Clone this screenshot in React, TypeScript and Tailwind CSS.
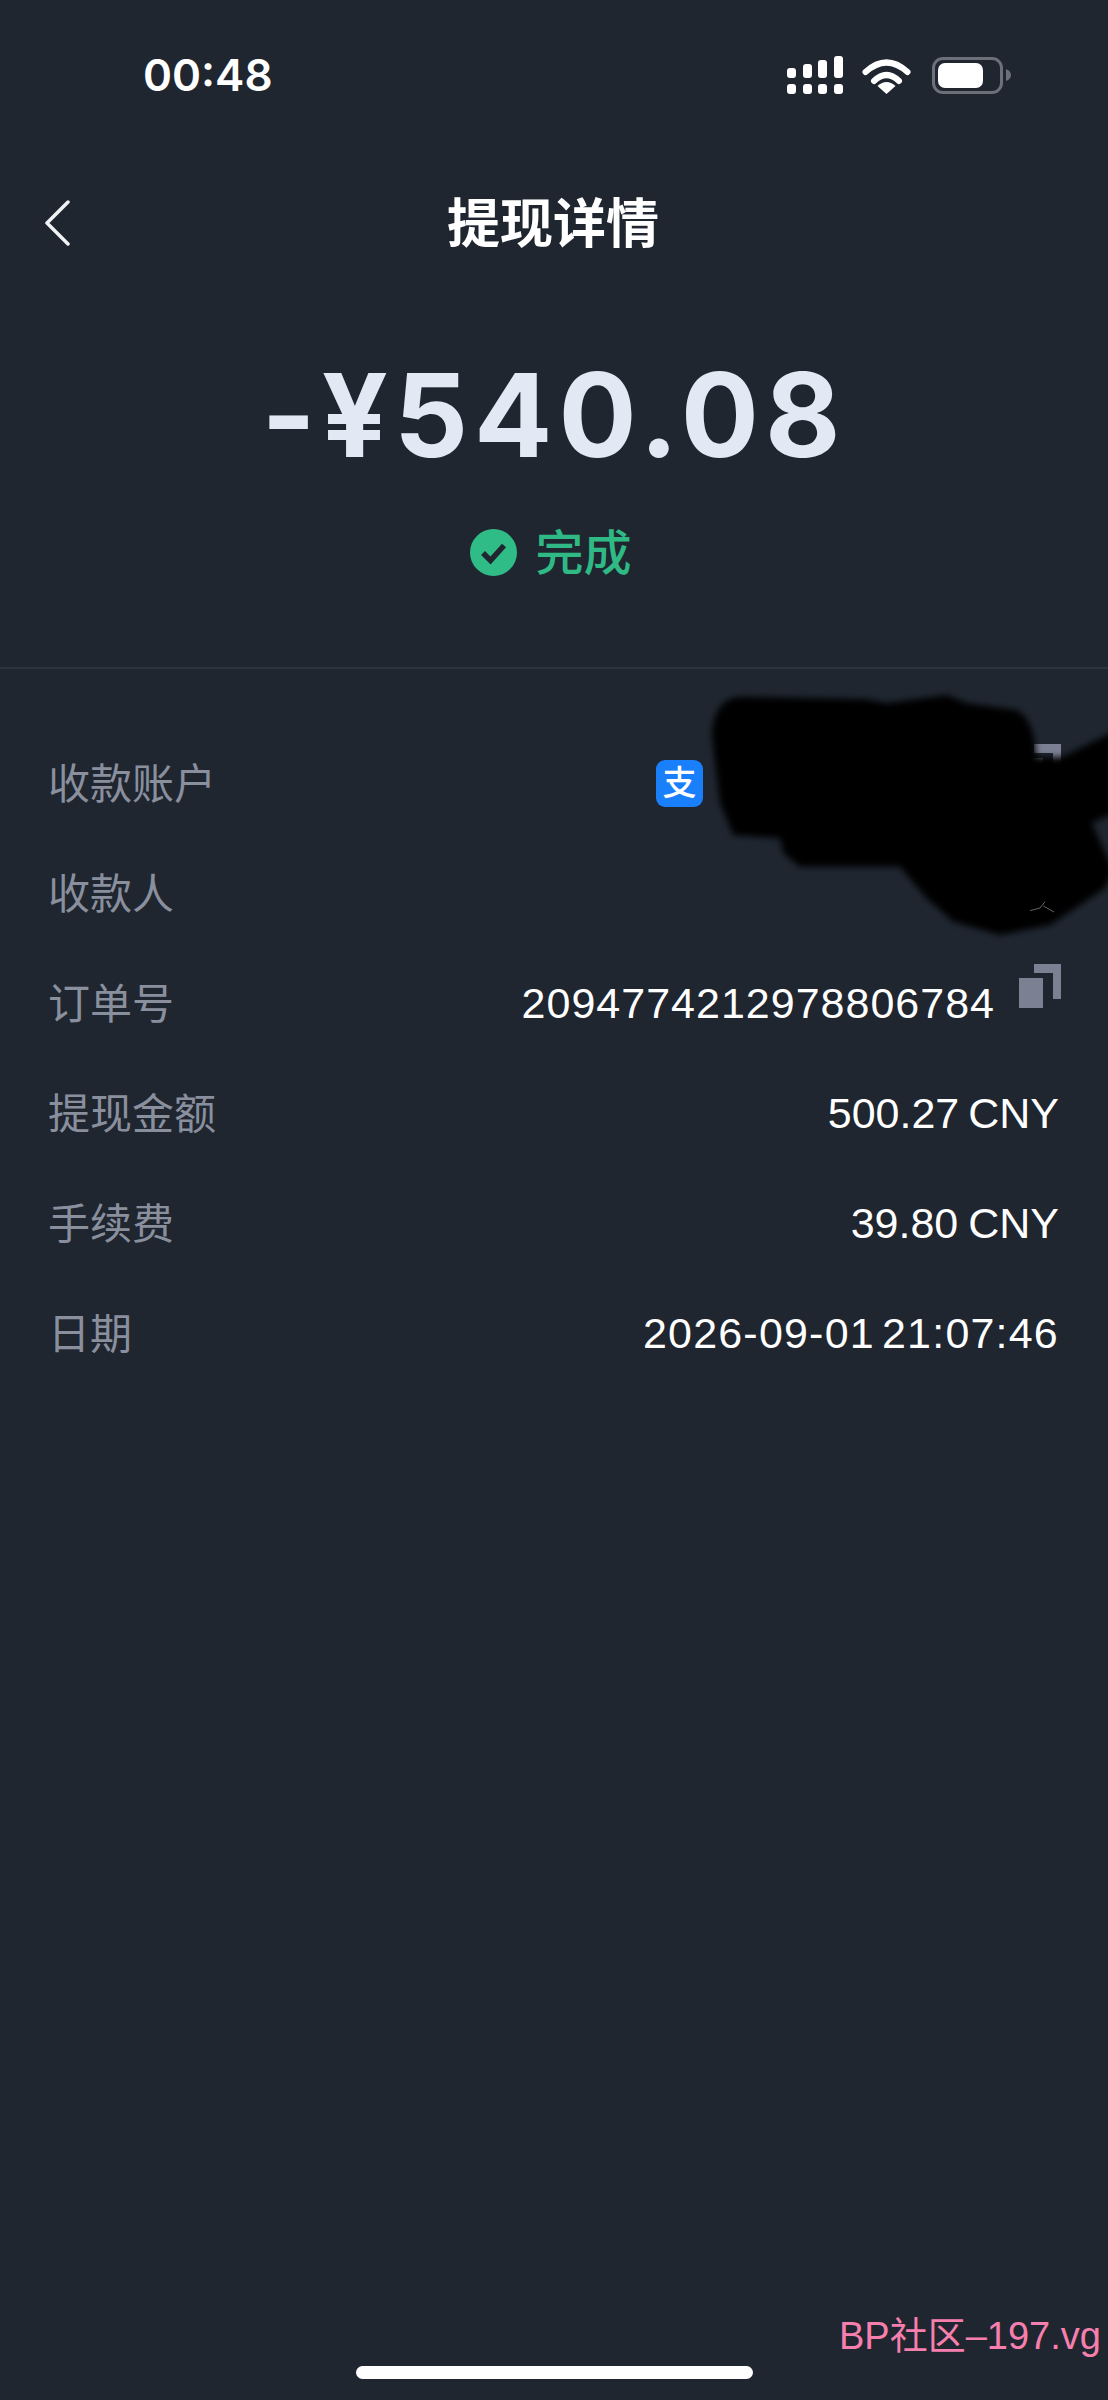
const rows = [
  { label: "提现金额", value: "500.27 CNY", cls: "[word-spacing:-3px]" },
  { label: "手续费", value: "39.80 CNY", cls: "[word-spacing:-2px]" },
  { label: "日期", value: "2026-09-01 21:07:46", cls: "tracking-[1.2px] [word-spacing:-6px]" },
];

const valueFont = { fontFamily: '"Liberation Sans", sans-serif' };

const CopyIcon = () => (
  <svg width="42" height="44" viewBox="0 0 42 44" className="mb-[34px] -mr-[2px] shrink-0" fill="#7b8093">
    <rect x="0" y="14" width="24" height="30" />
    <path d="M15 0H42V35H34V9H15Z" />
  </svg>
);

const Row = ({ label, children }: { label: string; children?: React.ReactNode }) => (
  <div className="flex h-[110px] items-center justify-between pl-[48px] pr-[49px]">
    <span className="mt-[2px] text-[42px] leading-none text-[#8a8f9e]">{label}</span>
    {children}
  </div>
);

export default function App() {
  return (
    <div
      className="relative flex h-[2400px] w-[1108px] flex-col overflow-hidden bg-[#1f2630] text-white"
      style={{ fontFamily: 'Inter, "Noto Sans CJK SC", sans-serif' }}
    >
      {/* status bar */}
      <div className="flex h-[150px] items-center justify-between pl-[143px] pr-[97px]">
        <span className="text-[44px] font-semibold leading-none">00:48</span>
        <div className="flex items-center">
          <svg width="56" height="38" viewBox="0 0 56 38" fill="#fff">
            <rect x="0" y="12" width="9" height="10" rx="3" />
            <rect x="16" y="8" width="9" height="14" rx="3" />
            <rect x="31" y="4" width="9" height="18" rx="3" />
            <rect x="47" y="0" width="9" height="22" rx="3" />
            <rect x="0" y="28" width="9" height="10" rx="3" />
            <rect x="16" y="28" width="9" height="10" rx="3" />
            <rect x="31" y="28" width="9" height="10" rx="3" />
            <rect x="47" y="28" width="9" height="10" rx="3" />
          </svg>
          <svg width="49" height="37" viewBox="0 0 49 37" className="ml-[19px]" fill="none">
            <path d="M3.5 15Q24.5 -4 45.5 15" stroke="#fff" strokeWidth="6" strokeLinecap="round" />
            <path d="M12 24Q24.5 12 37 24" stroke="#fff" strokeWidth="6" strokeLinecap="round" />
            <path d="M24.5 37L15.5 29Q24.5 21 33.5 29Z" fill="#fff" />
          </svg>
          <div className="ml-[21px] flex h-[37px] w-[71px] items-center rounded-[11px] border-[3px] border-[#6b7079] pl-[3px]">
            <div className="h-[25px] w-[45px] rounded-[7px] bg-white" />
          </div>
          <svg width="5" height="12" viewBox="0 0 5 12" className="ml-[3px]" fill="#6b7079">
            <path d="M0 0Q5 2 5 6Q5 10 0 12Z" />
          </svg>
        </div>
      </div>

      {/* nav */}
      <div className="relative flex h-[146px] items-center justify-center">
        <svg width="26" height="46" viewBox="0 0 26 46" className="absolute left-[44px] top-[50px]" fill="none">
          <path d="M24 2L3 23L24 44" stroke="#f1f2f4" strokeWidth="3.5" strokeLinecap="round" strokeLinejoin="round" />
        </svg>
        <h1 className="mt-[2px] pr-[2px] text-[53px] font-bold leading-none">提现详情</h1>
      </div>

      {/* amount */}
      <div className="mt-[49px] h-[140px] text-center text-[116px] font-bold leading-[140px] tracking-[6px] text-[#e3e9f4]">
        -¥540.08
      </div>

      <div className="mt-[43px] flex h-[48px] items-center justify-center gap-[18px] pr-[6px]">
        <svg width="47" height="47" viewBox="0 0 47 47">
          <circle cx="23.5" cy="23.5" r="23.5" fill="#2fbc87" />
          <path d="M13 24L20.5 31.5L34 16.5" fill="none" stroke="#1f2630" strokeWidth="5.5" />
        </svg>
        <span className="mt-[2px] text-[48px] font-medium leading-none text-[#2fb985]">完成</span>
      </div>

      <div className="mt-[91px] h-[2px] bg-[#2c333e]" />

      {/* details */}
      <div className="mt-[59px] flex flex-col">
        <Row label="收款账户">
          <div className="flex items-center">
            <div className="flex h-[47px] w-[47px] items-center justify-center rounded-[9px] bg-[#1a7ffb] text-[34px] font-medium leading-none">支</div>
            <div className="w-[316px]" />
            <CopyIcon />
          </div>
        </Row>
        <Row label="收款人" />
        <Row label="订单号">
          <div className="flex items-center">
            <span className="text-[43px] leading-none tracking-[1px]" style={valueFont}>2094774212978806784</span>
            <div className="w-[24px]" />
            <CopyIcon />
          </div>
        </Row>
        {rows.map((r) => (
          <Row key={r.label} label={r.label}>
            <span className={`text-[43px] leading-none ${r.cls}`} style={valueFont}>{r.value}</span>
          </Row>
        ))}
      </div>

      {/* home indicator */}
      <div className="mt-auto mb-[21px] ml-[356px] h-[13px] w-[397px] rounded-full bg-white" />

      {/* scribble over the account details */}
      <svg width="508" height="370" viewBox="0 0 1524 1110" className="absolute left-[600px] top-[670px]">
        <defs>
          <filter id="soft" x="-5%" y="-5%" width="110%" height="110%">
            <feGaussianBlur stdDeviation="10" />
          </filter>
        </defs>
        <path
          filter="url(#soft)"
          fill="#000"
          d="M335 190Q345 85 420 80L800 88L860 100L1040 75L1100 100L1250 120Q1305 150 1308 262L1385 262L1540 185L1540 430L1475 460L1540 600L1515 655L1350 765L1200 795L1060 755L980 685L900 590L600 590L550 550L540 505L400 495L360 400Z"
        />
        <path d="M1290 722L1320 714L1335 695M1330 708L1362 726" stroke="#8b8f98" strokeWidth="3" fill="none" opacity="0.7" />
      </svg>

      {/* watermark */}
      <span
        className="absolute left-[839px] top-[2314px] whitespace-nowrap text-[38px] leading-[44px] text-[#f77fae]"
        style={{ fontFamily: '"Liberation Sans", "Noto Sans CJK SC", sans-serif' }}
      >
        BP社区–197.vg
      </span>
    </div>
  );
}
